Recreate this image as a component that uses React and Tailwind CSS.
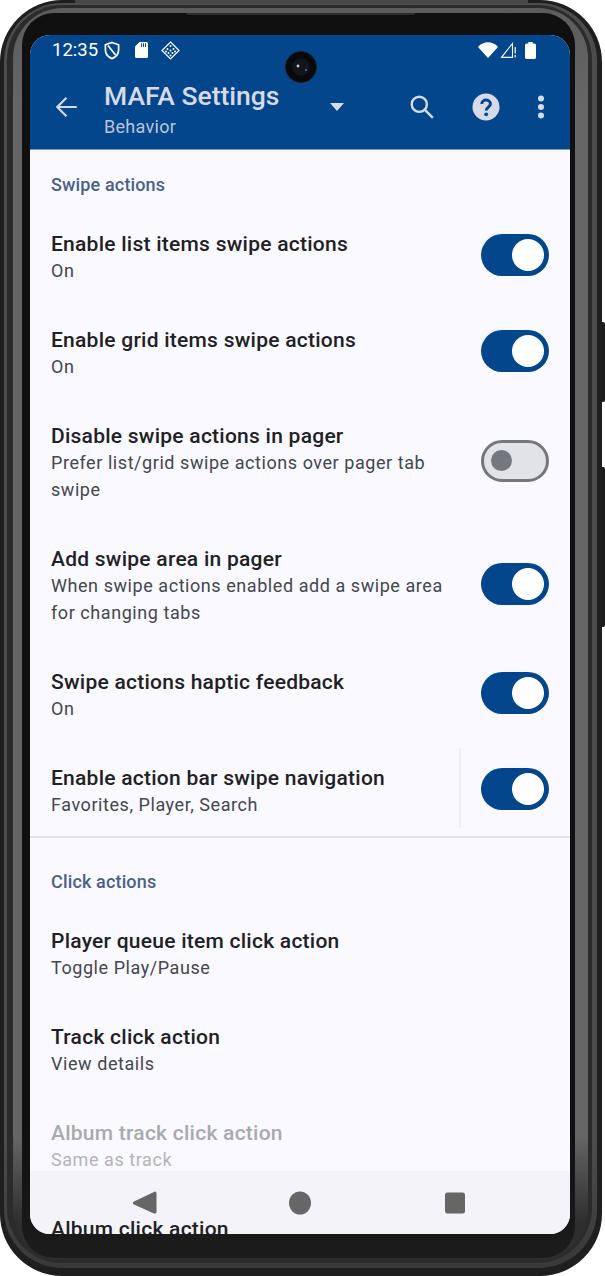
const rowsA = [
  { t: "Enable list items swipe actions", s: ["On"], on: true },
  { t: "Enable grid items swipe actions", s: ["On"], on: true },
  { t: "Disable swipe actions in pager", s: ["Prefer list/grid swipe actions over pager tab", "swipe"], on: false },
  { t: "Add swipe area in pager", s: ["When swipe actions enabled add a swipe area", "for changing tabs"], on: true },
  { t: "Swipe actions haptic feedback", s: ["On"], on: true },
];

function Toggle({ on }) {
  if (on) {
    return (
      <div className="w-[68px] h-[42px] shrink-0 mb-[2px] rounded-full bg-[#03468c] flex items-center justify-end pr-[5px]">
        <div className="w-[32px] h-[32px] rounded-full bg-white" />
      </div>
    );
  }
  return (
    <div className="w-[68px] h-[42px] shrink-0 mb-[2px] rounded-full bg-[#e2e2e9] border-[3px] border-[#74777f] flex items-center pl-[7px]">
      <div className="w-[21px] h-[21px] rounded-full bg-[#74777f]" />
    </div>
  );
}

function Row({ t, s, on, dim, cls = "py-[20px]" }) {
  return (
    <div className={`flex items-center justify-between pl-[21px] pr-[21px] ${cls}`}>
      <div className="flex-1 min-w-0 pt-[3px]">
        <div className={`text-[21px] leading-[26px] font-medium tracking-[0.25px] ${dim ? "text-[#a9a9b0]" : "text-[#1f2124]"}`}>{t}</div>
        {s.map((x) => (
          <div key={x} className={`text-[18px] leading-[27px] tracking-[0.56px] ${dim ? "text-[#b3b4bb]" : "text-[#43474e]"}`}>{x}</div>
        ))}
      </div>
      {on !== undefined && <Toggle on={on} />}
    </div>
  );
}

function Section({ children, cls }) {
  return <div className={`pl-[21px] text-[18px] leading-[24px] font-medium text-[#4a6088] tracking-[0.15px] ${cls}`}>{children}</div>;
}

function StatusBar() {
  return (
    <div className="h-[30px] flex items-center pl-[22px] pr-[34px] text-white shrink-0">
      <span className="text-[18.5px] leading-[30px]">12:35</span>
      <svg width="16" height="19" viewBox="0 0 16 19" className="ml-[6px]" fill="none" stroke="white" strokeWidth="1.7">
        <path d="M8 1.5 L14.6 3.8 V9 C14.6 13 11.8 16 8 17.6 C4.2 16 1.4 13 1.4 9 V3.8 Z" />
        <path d="M4 4.5 L11.5 14" />
      </svg>
      <svg width="13" height="16" viewBox="0 0 13 16" className="ml-[15px]" fill="white">
        <path d="M4.5 0 H11.5 A1.5 1.5 0 0 1 13 1.5 V14.5 A1.5 1.5 0 0 1 11.5 16 H1.5 A1.5 1.5 0 0 1 0 14.5 V4.5 Z M6 1.2 V5 H7 V1.2 Z M8 1.2 V5 H9 V1.2 Z M10 1.2 V5 H11 V1.2 Z" fillRule="evenodd" />
      </svg>
      <svg width="19" height="19" viewBox="0 0 19 19" className="ml-[13px]" fill="none" stroke="white" strokeWidth="1.2">
        <path d="M9.5 1 L18 9.5 L9.5 18 L1 9.5 Z" />
        <g fill="white" stroke="none">
          <circle cx="9.5" cy="5" r="1" /><circle cx="6.5" cy="8" r="1" /><circle cx="12.5" cy="8" r="1" /><circle cx="9.5" cy="9.5" r="1" />
          <circle cx="5" cy="10.5" r="1" /><circle cx="14" cy="10.5" r="1" /><circle cx="7.5" cy="12" r="1" /><circle cx="11.5" cy="12" r="1" /><circle cx="9.5" cy="14.5" r="1" />
        </g>
      </svg>
      <div className="flex-1" />
      <svg width="20" height="16" viewBox="0 0 20 16" fill="white"><path d="M0 5 C5.5 -1.2 14.5 -1.2 20 5 L10 16 Z" /></svg>
      <svg width="16" height="16" viewBox="0 0 16 16" className="ml-[2px]" fill="none" stroke="white" strokeWidth="1.1">
        <path d="M1.5 15.4 L12.5 1.5 V15.4 Z" />
        <path d="M15.2 5 V11.5 M15.2 13 V15.5" strokeWidth="1.2" />
      </svg>
      <svg width="11" height="17" viewBox="0 0 10 17" className="ml-[9px]" fill="white" preserveAspectRatio="none">
        <path d="M3 0 H7 V1.5 H8.5 A1.5 1.5 0 0 1 10 3 V15.5 A1.5 1.5 0 0 1 8.5 17 H1.5 A1.5 1.5 0 0 1 0 15.5 V3 A1.5 1.5 0 0 1 1.5 1.5 H3 Z" />
      </svg>
    </div>
  );
}

function AppBar() {
  const c = "#d7dae8";
  return (
    <div className="h-[85px] flex items-start shrink-0 border-b border-b-[#7d9ac6]">
      <svg width="26" height="26" viewBox="0 0 24 24" fill="none" stroke={c} strokeWidth="2" className="ml-[24px] mt-[29px]">
        <path d="M21 12 H3.5 M11.5 3.5 L3 12 L11.5 20.5" />
      </svg>
      <div className="ml-[24px] mt-[14px] w-[226px]">
        <div className="text-[26.5px] leading-[34px] font-medium text-[#d7dae8]">MAFA Settings</div>
        <div className="text-[18px] leading-[24px] tracking-[0.3px] text-[#bcc2d8] mt-[2px]">Behavior</div>
      </div>
      <svg width="14" height="8" viewBox="0 0 14 8" fill={c} className="mt-[38px]"><path d="M0 0 H14 L7 8 Z" /></svg>
      <svg width="26" height="26" viewBox="0 0 24 24" fill="none" stroke={c} strokeWidth="2.2" className="ml-[65px] mt-[29px]">
        <circle cx="9.5" cy="9.5" r="7" /><path d="M14.5 14.5 L22 22" />
      </svg>
      <svg width="28" height="28" viewBox="0 0 28 28" className="ml-[37px] mt-[28px]">
        <circle cx="14" cy="14" r="13.5" fill={c} />
        <path d="M9.8 11 C9.8 5.8 18.4 5.8 18.4 11 C18.4 14 14.2 14.3 14.2 17.5" fill="none" stroke="#03468c" strokeWidth="3" />
        <circle cx="14.2" cy="21.3" r="1.9" fill="#03468c" />
      </svg>
      <svg width="8" height="24" viewBox="0 0 8 24" fill={c} className="ml-[37px] mt-[30px]">
        <circle cx="4" cy="3.5" r="3" /><circle cx="4" cy="12" r="3" /><circle cx="4" cy="20.5" r="3" />
      </svg>
    </div>
  );
}

export default function App() {
  return (
    <div className="w-[605px] h-[1276px] bg-white relative overflow-hidden font-['Roboto',sans-serif]">
      {/* side keys */}
      <div className="absolute right-0 top-[322px] w-[6px] h-[80px] bg-[#1c1c1c] rounded-r-[2px]" />
      <div className="absolute right-0 top-[467px] w-[6px] h-[160px] bg-[#1c1c1c] rounded-r-[2px]" />

      {/* device body: nested metal bands */}
      <div className="w-[602px] h-[1276px] rounded-[62px] bg-[#1f1f1f] pt-[3px] pl-[4px] pr-[5px] pb-[8px] relative">
        <div className="w-full h-full rounded-[58px] bg-[linear-gradient(to_bottom,#4c4c4c_0%,#4c4c4c_90%,#383838_100%)] pt-[2px] pl-[3px] pr-[5px] pb-[5px]">
          <div className="w-full h-full rounded-[55px] bg-[#2b2b2b] pt-[3px] pl-[6px] pr-[4px] pb-[3px]">
            <div className="w-full h-full rounded-[50px] bg-[linear-gradient(to_bottom,#5c5c5c_0%,#666666_8%,#666666_90%,#2e2e2e_97%)] pt-[5px] pl-[9px] pr-[13px] pb-[2px]">
              <div className="w-full h-full rounded-[32px] bg-[linear-gradient(to_bottom,#101010_0%,#101010_90%,#1c1c1c_100%)] pt-[22px] pl-[8px] pr-[5px] pb-[24px]">
                {/* screen */}
                <div className="w-[540px] h-[1199px] rounded-[20px] overflow-hidden bg-[#faf9ff] relative flex flex-col">
                  <div className="bg-[#03468c] shrink-0">
                    <StatusBar />
                    <AppBar />
                  </div>
                  <div className="flex-1 overflow-hidden">
                    <Section cls="pt-[23px]">Swipe actions</Section>
                    <div className="mt-[11px]">
                      {rowsA.map((r) => <Row key={r.t} {...r} />)}
                    </div>
                    <div className="relative border-b-2 border-b-[#e2e2e9]">
                      <Row t="Enable action bar swipe navigation" s={["Favorites, Player, Search"]} on={true} cls="pt-[20px] pb-[18px]" />
                      <div className="absolute left-[429px] top-[6px] bottom-[8px] w-[2px] bg-[#eeeef3]" />
                    </div>
                    <Section cls="pt-[32px]">Click actions</Section>
                    <div className="mt-[11px]">
                      <Row t="Player queue item click action" s={["Toggle Play/Pause"]} />
                      <Row t="Track click action" s={["View details"]} />
                      <Row t="Album track click action" s={["Same as track"]} dim />
                      <Row t="Album click action" s={[]} cls="relative z-10 py-[20px]" />
                    </div>
                  </div>
                  {/* navigation bar */}
                  <div className="absolute left-0 right-0 bottom-0 h-[63px] bg-[#f3f3f9]">
                    <svg width="540" height="63" viewBox="0 0 540 63" className="block">
                      <path d="M125 20.5 Q126 20 126.5 22 V41 Q126.5 43 124 42.5 L104 33.5 Q101.5 32 104 30.5 Z" fill="#666666" />
                      <ellipse cx="270" cy="32" rx="11" ry="11.5" fill="#666666" />
                      <rect x="415" y="21.5" width="20" height="21" rx="2.5" fill="#666666" />
                    </svg>
                  </div>
                </div>
              </div>
            </div>
          </div>
        </div>
        {/* earpiece and top rim details */}
        <div className="absolute left-[75px] top-0 w-[453px] h-[3px] bg-[#474747]" />
        <div className="absolute left-[186px] top-[13px] w-[229px] h-[2px] rounded-b-[2px] bg-[#2c2c2c]" />
        {/* punch-hole camera */}
        <div className="absolute left-[285px] top-[51px] w-[32px] h-[32px] rounded-full bg-[#08090c] border border-[#1d1d20] flex items-center justify-center">
          <svg width="24" height="24" viewBox="0 0 24 24">
            <circle cx="12" cy="12" r="9" fill="#12151a" />
            <circle cx="9" cy="11" r="1.4" fill="#c8ccd0" />
            <circle cx="17" cy="15" r="0.9" fill="#4a8fd0" />
          </svg>
        </div>
      </div>
    </div>
  );
}
